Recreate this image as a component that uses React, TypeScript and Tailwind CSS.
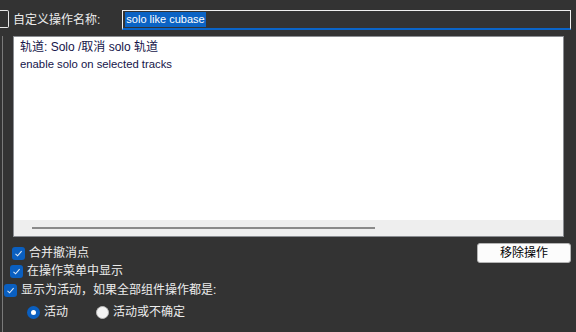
import React from "react";

const font = { fontFamily: '"Liberation Sans", "Noto Sans CJK SC", sans-serif' };

function Check({ className = "" }: { className?: string }) {
  return (
    <span className={`flex h-[13px] w-[13px] items-center justify-center rounded-[3px] bg-[#0a5fc0] ${className}`}>
      <svg width="9" height="9" viewBox="0 0 9 9" fill="none">
        <path d="M1.5 4.8 L3.6 6.8 L7.6 2.2" stroke="#dbe8f7" strokeWidth="1.1" />
      </svg>
    </span>
  );
}

function Radio({ on }: { on: boolean }) {
  return on ? (
    <span className="flex h-[13px] w-[13px] items-center justify-center rounded-full bg-[#0a5fc0]">
      <span className="h-[5px] w-[5px] rounded-full bg-white" />
    </span>
  ) : (
    <span className="h-[13px] w-[13px] rounded-full border border-[#bbbbbb] bg-[#f4f4f4]" />
  );
}

export default function App() {
  return (
    <div className="h-[332px] w-[576px] overflow-hidden bg-[#333333] text-[12px] text-[#ececec]" style={font}>
      {/* name row */}
      <div className="mt-[10px] flex h-[19px] items-stretch">
        <span className="h-[18px] w-[9px] rounded-r-[2px] border border-l-0 border-[#e8e8e8]" />
        <span className="ml-[4px] flex items-center leading-none">自定义操作名称:</span>
        <div className="ml-[22px] flex h-[20px] w-[449px] items-center border-x border-t border-b-2 border-x-[#f0f0f0] border-t-[#f0f0f0] border-b-[#0a64c8] pl-[2px]">
          <span className="flex h-[15px] items-center bg-[#0b63c4] px-[1px] text-[11px] leading-none text-white">solo like cubase</span>
        </div>
      </div>

      <div className="mt-[7px] flex">
        <div className="ml-[2px] h-[296px] w-[1px] bg-[#7a7a7a]" />
        <div className="ml-[10px] flex flex-col">
          {/* description panel */}
          <div className="flex h-[201px] w-[551px] flex-col border border-[#8a8d92] bg-white">
            <div className="flex-1 px-[6px] pt-[3px] text-[#14144a]">
              <div className="text-[12px] leading-[14px]">轨道: Solo /取消 solo 轨道</div>
              <div className="mt-[4px] text-[11.3px] leading-[13px]">enable solo on selected tracks</div>
            </div>
            <div className="flex h-[16px] items-center bg-[#eeeeee] pl-[18px]">
              <div className="h-[2px] w-[343px] bg-[#8a8a8a]" />
            </div>
          </div>

          {/* options */}
          <div className="mt-[6px] flex h-[20px] items-center justify-between">
            <label className="flex items-center gap-[4px]">
              <Check className="-ml-[1px]" />
              <span>合并撤消点</span>
            </label>
            <button className="mr-[-7px] h-[20px] w-[94px] rounded-[3px] border border-[#b4b4b4] bg-[#fcfcfc] text-[12px] text-black">
              移除操作
            </button>
          </div>
          <label className="-ml-[3px] flex h-[16px] items-center gap-[4px]">
            <Check />
            <span>在操作菜单中显示</span>
          </label>
          <label className="-ml-[9px] mt-[2px] flex h-[18px] items-center gap-[4px]">
            <Check />
            <span>显示为活动，如果全部组件操作都是:</span>
          </label>
          <div className="ml-[14px] mt-[4px] flex h-[18px] items-center">
            <label className="flex items-center gap-[4px]">
              <Radio on />
              <span>活动</span>
            </label>
            <label className="ml-[28px] flex items-center gap-[4px]">
              <Radio on={false} />
              <span>活动或不确定</span>
            </label>
          </div>
        </div>
      </div>
    </div>
  );
}
